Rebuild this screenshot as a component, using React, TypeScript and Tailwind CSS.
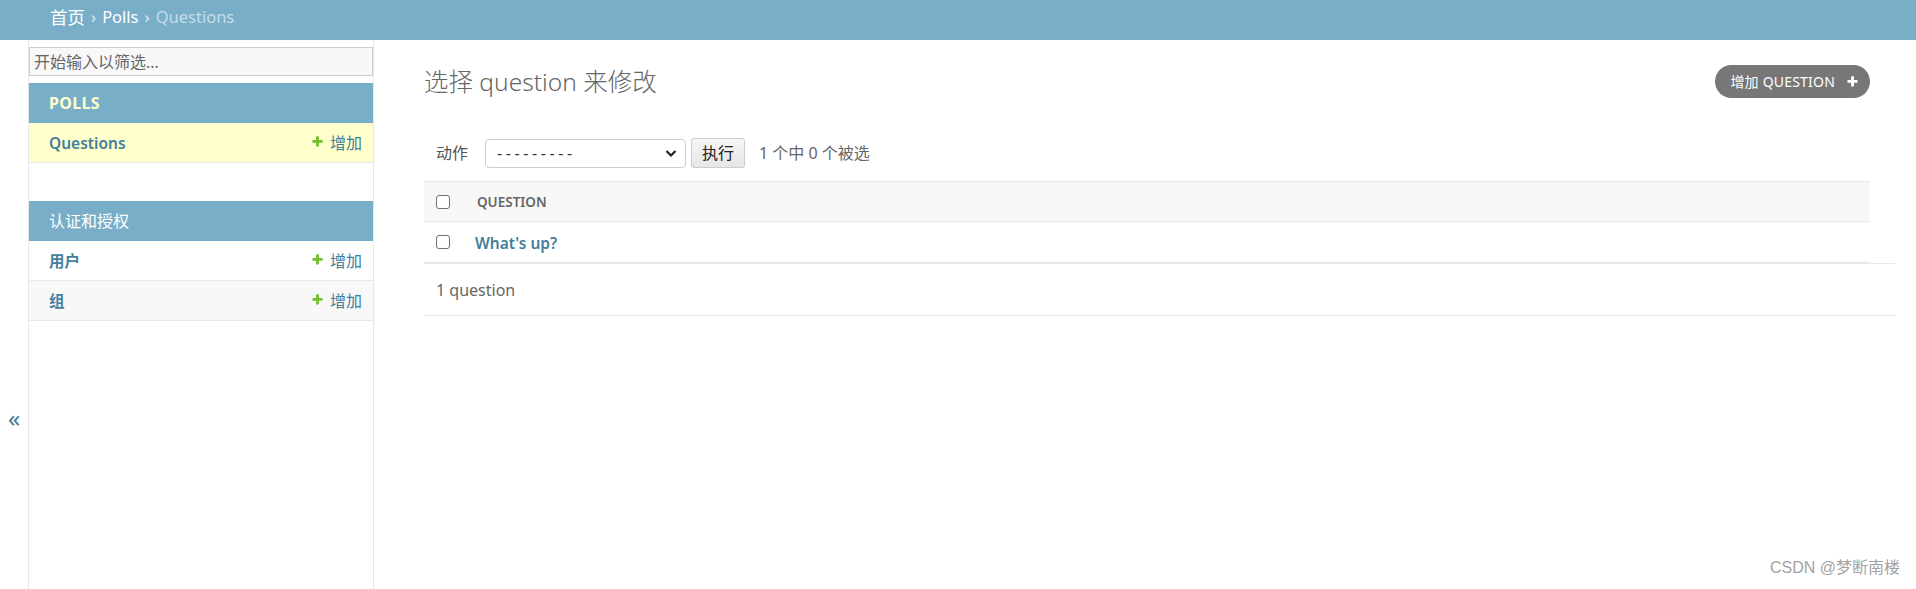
import React from "react";

const PLUS =
  "M1600 796v192q0 40-28 68t-68 28h-416v416q0 40-28 68t-68 28h-192q-40 0-68-28t-28-68v-416h-416q-40 0-68-28t-28-68v-192q0-40 28-68t68-28h416v-416q0-40 28-68t68-28h192q40 0 68 28t28 68v416h416q40 0 68 28t28 68z";

function PlusIcon({ className, color }: { className?: string; color: string }) {
  return (
    <svg viewBox="0 0 1792 1792" className={className}>
      <path fill={color} d={PLUS} />
    </svg>
  );
}

function Box() {
  return <span className="block w-[14px] h-[14px] border border-[#6f6f6f] rounded-[3px] bg-white" />;
}

type Row = { name: string; current?: boolean; alt?: boolean };

function Module({ title, current, rows }: { title: string; current?: boolean; rows: Row[] }) {
  return (
    <div>
      <div
        className={`h-[40px] flex items-center pl-[20px] text-[16px] bg-[#79aec8] ${
          current ? "text-[#ffffcc] font-bold tracking-[0.3px]" : "text-white"
        }`}
      >
        {title}
      </div>
      {rows.map((r) => (
        <div
          key={r.name}
          className={`h-[40px] flex items-center justify-between pl-[20px] pr-[11px] border-b border-[#e8e8e8] ${
            r.current ? "bg-[#ffffcc]" : r.alt ? "bg-[#f8f8f8]" : "bg-white"
          }`}
        >
          <span className="text-[15.5px] font-semibold text-[#447e9b] mt-[2px]">{r.name}</span>
          <span className="flex items-center gap-[6px] text-[16px] text-[#447e9b]">
            <PlusIcon className="w-[13px] h-[13px] -mt-[3px]" color="#70bf2b" />
            增加
          </span>
        </div>
      ))}
    </div>
  );
}

export default function App() {
  return (
    <div className="relative h-[589px] overflow-hidden flex flex-col bg-white font-['Noto_Sans','Noto_Sans_CJK_SC',sans-serif] text-[#333]">
      {/* breadcrumbs */}
      <div className="h-[40px] shrink-0 bg-[#79aec8] flex items-center pl-[50px] pb-[5px] text-[16.5px] text-[#c4dce8]">
        <span className="text-white text-[17.5px]">首页</span>
        <span className="mx-[6px] text-[#e3eff5]">›</span>
        <span className="text-white">Polls</span>
        <span className="mx-[6px] text-[#e3eff5]">›</span>
        <span>Questions</span>
      </div>

      <div className="flex flex-1 min-h-0">
        {/* sidebar toggle */}
        <div className="w-[29px] shrink-0 border-r border-[#e8e8e8] flex justify-center pt-[366px]">
          <span className="text-[24px] leading-none text-[#447e9b]">«</span>
        </div>

        {/* sidebar */}
        <div className="w-[345px] shrink-0 border-r border-[#e8e8e8] pt-[7px]">
          <div className="h-[29px] border border-[#cccccc] bg-[#f8f8f8] flex items-center px-[4px] text-[16px] text-[#666]">
            开始输入以筛选...
          </div>
          <div className="mt-[7px]">
            <Module title="POLLS" current rows={[{ name: "Questions", current: true }]} />
          </div>
          <div className="mt-[38px]">
            <Module title="认证和授权" rows={[{ name: "用户" }, { name: "组", alt: true }]} />
          </div>
        </div>

        {/* content */}
        <div className="flex-1 pl-[50px] pr-[46px] pt-[24px]">
          <div className="h-[34px] flex items-center justify-between">
            <h1 className="text-[24.5px] font-light text-[#666] mt-[2px]">选择 question 来修改</h1>
            <div className="h-[33px] rounded-full bg-[#777777] flex items-center pl-[15px] pr-[11px] text-white text-[14px] tracking-[0.2px]">
              增加 QUESTION
              <PlusIcon className="w-[13px] h-[13px] ml-[11px]" color="#ffffff" />
            </div>
          </div>

          {/* actions */}
          <div className="mt-[40px] h-[30px] flex items-center pl-[12px] text-[16px]">
            <span className="text-[#555]">动作</span>
            <div className="ml-[17px] w-[201px] h-[29px] border border-[#cccccc] rounded-[4px] bg-white flex items-center justify-between pl-[11px] pr-[8px] text-[#333]">
              <span className="tracking-[3.6px]">---------</span>
              <svg viewBox="0 0 12 8" className="w-[12px] h-[9px]">
                <path d="M1.5 1.5 6 6l4.5-4.5" fill="none" stroke="#222" strokeWidth="2.2" />
              </svg>
            </div>
            <div className="ml-[5px] w-[54px] h-[30px] border border-[#cccccc] rounded-[3px] bg-gradient-to-b from-[#f6f6f6] to-[#e6e6e6] flex items-center justify-center text-[#222]">
              执行
            </div>
            <span className="ml-[14px] text-[#666]">1 个中 0 个被选</span>
          </div>

          {/* results */}
          <div className="mt-[13px]">
            <div className="h-[41px] bg-[#f8f8f8] border-t border-b border-[#e8e8e8] flex items-center pl-[12px]">
              <Box />
              <span className="ml-[27px] text-[13.5px] font-semibold text-[#666] mt-[2px]">QUESTION</span>
            </div>
            <div className="h-[41px] border-b border-[#e8e8e8] flex items-center pl-[12px]">
              <Box />
              <span className="ml-[25px] text-[15.5px] font-semibold text-[#447e9b] mt-[3px]">What's up?</span>
            </div>
          </div>

          {/* paginator */}
          <div className="-mr-[25px] h-[53px] border-t border-b border-[#e8e8e8] flex items-center pl-[12px] text-[16px] text-[#666]">
            1 question
          </div>
        </div>
      </div>

      <div className="absolute right-[16px] bottom-[9px] text-[16px] text-[#a3a3a3] font-['Liberation_Sans','Noto_Sans_CJK_SC',sans-serif]">
        CSDN @梦断南楼
      </div>
    </div>
  );
}
